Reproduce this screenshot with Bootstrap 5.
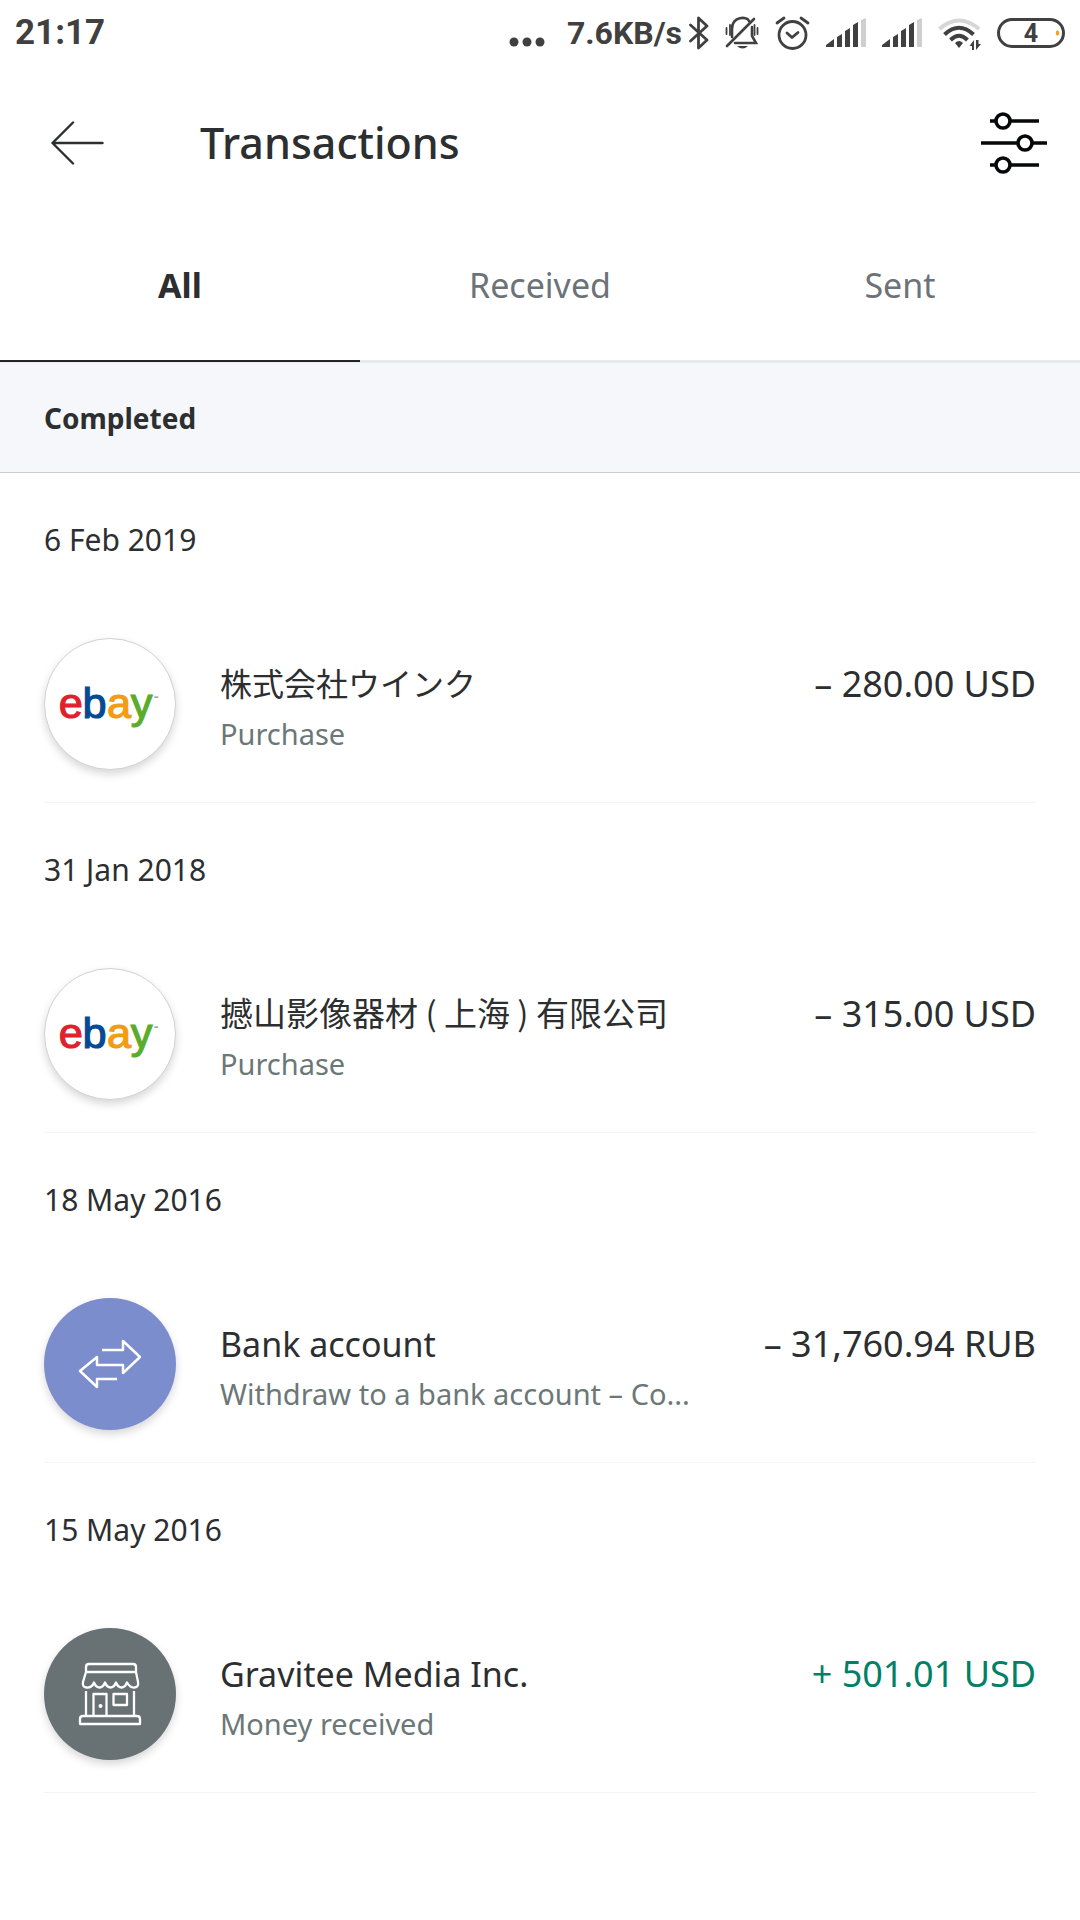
<!DOCTYPE html>
<html lang="en">
<head>
<meta charset="utf-8">
<meta name="viewport" content="width=device-width, initial-scale=1">
<title>Transactions</title>
<link href="https://cdn.jsdelivr.net/npm/bootstrap@5.3.0/dist/css/bootstrap.min.css" rel="stylesheet">
<style>
  body { font-family: "Noto Sans", "Noto Sans CJK SC", sans-serif; color: #2c2e2f; background: #fff; }
  svg { display: block; flex: none; }
  .status { height: 66px; padding: 0 15px; font-family: Roboto, sans-serif; font-weight: 700; color: #404040; }
  .clock { font-size: 35px; line-height: 40px; }
  .speed { font-size: 32px; line-height: 40px; margin-left: 22px; margin-right: 7px; }
  .ico-gap { gap: 16px; }
  .appbar { height: 154px; padding: 0 33px 0 51px; }
  .appbar h1 { font-size: 43px; line-height: 56px; font-weight: 500; margin-left: 96px; }
  .tabs { border-bottom: 1px solid #e9eaeb; height: 143px; }
  .tabs .nav-link { height: 142px; padding: 0 0 10px; font-size: 34px; line-height: 48px; color: #6c7378; border: 0; border-bottom: 2px solid #e9eaeb; border-radius: 0; background: none; }
  .tabs .nav-link.active { color: #2c2e2f; font-weight: 700; border-bottom-color: #252525; }
  .section-head { background: #f5f7fb; border-bottom: 1px solid #cdced0; height: 110px; padding: 0 44px; font-size: 28px; line-height: 40px; font-weight: 700; }
  .group { height: 330px; margin: 0 44px; padding-top: 46px; border-bottom: 1px solid #f4f5f5; }
  .group h3 { font-size: 30px; line-height: 42px; font-weight: 400; margin: 0 0 77px; }
  .entry { gap: 44px; color: inherit; text-decoration: none; }
  .avatar { width: 132px; height: 132px; border-radius: 50%; box-shadow: 0 4px 9px rgba(0,0,0,.16); }
  .shop { border: 1px solid #d2d2d2; background: #fff; }
  .bank { background: #7b8dcd; }
  .store { background: #687173; }
  .details { padding-top: 21px; }
  .payee { font-size: 34px; line-height: 50px; }
  .payee:lang(ja), .payee:lang(zh) { line-height: 46px; padding-bottom: 4px; }
  .payee:lang(ja) { font-size: 32px; font-family: "Noto Sans CJK JP", sans-serif; }
  .payee:lang(zh) { font-size: 33px; font-family: "Noto Sans CJK SC", sans-serif; }
  .kind { font-size: 29px; line-height: 50px; color: #6c7778; }
  .amount { font-size: 36px; line-height: 50px; }
  .credit { color: #008066; }
</style>
</head>
<body>
<div class="status d-flex align-items-center justify-content-between">
  <span class="clock">21:17</span>
  <div class="d-flex align-items-center">
    <svg width="36" height="34" viewBox="0 0 36 34" fill="#404040"><circle cx="5" cy="26" r="4.5"/><circle cx="18" cy="26" r="4.5"/><circle cx="31" cy="26" r="4.5"/></svg>
    <span class="speed">7.6KB/s</span>
    <div class="d-flex align-items-center ico-gap">
      <svg width="20" height="34" viewBox="0 0 20 34" fill="none" stroke="#404040" stroke-width="2.8" stroke-linecap="round" stroke-linejoin="round"><path d="M1.5 9 18 24 9.5 32V2L18 10 1.5 25"/></svg>
      <svg width="34" height="34" viewBox="0 0 34 34" fill="none" stroke="#404040" stroke-width="2.6" stroke-linecap="round"><path d="M7 21V13C7 0 22 0 24 5M27 11V20L31 27H10M2 30 29 3"/><path d="M1.5 12v6M5 9v10M32.500 12v6M29.500 9v10" stroke-width="1.8"/><path d="M12 30H23Q17.500 35 12 30Z" fill="#404040" stroke="none"/></svg>
      <svg width="35" height="34" viewBox="0 0 35 34" fill="none" stroke="#404040" stroke-width="2.8" stroke-linecap="round" stroke-linejoin="round"><circle cx="17.500" cy="19" r="13.500"/><path d="M12 17 17 21.500 23 16.500M2 7 9 2M26 2 33 7"/></svg>
      <svg width="40" height="34" viewBox="0 0 40 34" fill="#404040"><path d="M0 31V29L8 23V31ZM11 31V21L16 18V31ZM19 31V15L24 12V31ZM27 31V9L32 6V31Z"/><path d="M35 31V4L40 2V31Z" fill="#cfcfcf"/></svg>
      <svg width="40" height="34" viewBox="0 0 40 34" fill="#404040"><path d="M0 31V29L8 23V31ZM11 31V21L16 18V31ZM19 31V15L24 12V31ZM27 31V9L32 6V31Z"/><path d="M35 31V4L40 2V31Z" fill="#cfcfcf"/></svg>
      <svg width="43" height="34" viewBox="0 0 43 34" fill="none" stroke="#404040" stroke-width="4"><path d="M1.500 13Q21 -4 41 13" stroke="#d6d6d6"/><path d="M6.500 18.500Q21 5 35.500 18.500M12.500 24Q21 15.500 29.500 24"/><path d="M17 27Q21 23 25 27L21 32Z" fill="#404040" stroke="none"/><path d="M36 34V24L31.500 30H34V34ZM38 24V34L43 28H40.500V24Z" fill="#404040" stroke="none"/></svg>
      <svg width="68" height="34" viewBox="0 0 68 34"><rect x="1.500" y="3.500" width="65" height="27" rx="13.500" fill="none" stroke="#404040" stroke-width="3"/><text x="34" y="26" text-anchor="middle" font-family="Roboto" font-weight="700" font-size="25" fill="#404040">4</text><ellipse cx="60.500" cy="17" rx="1.700" ry="2.700" fill="#f9a11b"/></svg>
    </div>
  </div>
</div>

<header class="appbar d-flex align-items-center">
  <button class="btn p-0 border-0" type="button" aria-label="Back"><svg width="53" height="44" viewBox="0 0 53 44" fill="none" stroke="#2c2e2f" stroke-width="2.4" stroke-linecap="round" stroke-linejoin="round"><path d="M51.500 22H1.500M22 1.500 1.500 22 22 42.500"/></svg></button>
  <h1 class="mb-0 me-auto">Transactions</h1>
  <button class="btn p-0 border-0" type="button" aria-label="Filter"><svg width="66" height="64" viewBox="0 0 66 64" fill="#fff" stroke="#050808" stroke-width="3.600"><path d="M9 10H58M0 32H66M9 54H58"/><circle cx="22" cy="10" r="7"/><circle cx="44" cy="32" r="7"/><circle cx="22" cy="54" r="7"/></svg></button>
</header>

<ul class="nav nav-fill nav-justified tabs" role="tablist">
  <li class="nav-item" role="presentation"><button class="nav-link active" type="button" role="tab" aria-selected="true">All</button></li>
  <li class="nav-item" role="presentation"><button class="nav-link" type="button" role="tab" aria-selected="false">Received</button></li>
  <li class="nav-item" role="presentation"><button class="nav-link" type="button" role="tab" aria-selected="false">Sent</button></li>
</ul>

<main>
  <h2 class="section-head d-flex align-items-center mb-0">Completed</h2>

  <section class="group">
    <h3>6 Feb 2019</h3>
    <a href="#" class="entry d-flex">
      <svg class="avatar shop" viewBox="0 0 132 132" font-family="Liberation Sans" font-size="44" stroke-width="1.200"><text x="14" y="80" fill="#e0202c" stroke="#e0202c">e</text><text x="38" y="80" fill="#064a94" stroke="#064a94">b</text><text x="63" y="80" fill="#f39b13" stroke="#f39b13">a</text><text x="87" y="80" fill="#5aac2b" stroke="#5aac2b">y</text><path d="M111 59h4" stroke="#888"/></svg>
      <div class="details flex-grow-1"><div class="payee" lang="ja">株式会社ウインク</div><div class="kind">Purchase</div></div>
      <div class="details amount">– 280.00 USD</div>
    </a>
  </section>

  <section class="group">
    <h3>31 Jan 2018</h3>
    <a href="#" class="entry d-flex">
      <svg class="avatar shop" viewBox="0 0 132 132" font-family="Liberation Sans" font-size="44" stroke-width="1.200"><text x="14" y="80" fill="#e0202c" stroke="#e0202c">e</text><text x="38" y="80" fill="#064a94" stroke="#064a94">b</text><text x="63" y="80" fill="#f39b13" stroke="#f39b13">a</text><text x="87" y="80" fill="#5aac2b" stroke="#5aac2b">y</text><path d="M111 59h4" stroke="#888"/></svg>
      <div class="details flex-grow-1"><div class="payee" lang="zh">撼山影像器材 ( 上海 ) 有限公司</div><div class="kind">Purchase</div></div>
      <div class="details amount">– 315.00 USD</div>
    </a>
  </section>

  <section class="group">
    <h3>18 May 2016</h3>
    <a href="#" class="entry d-flex">
      <svg class="avatar bank" viewBox="0 0 132 132" fill="none" stroke="#fff" stroke-width="2.500" stroke-linejoin="round"><path d="M58 52H79V43L96 59 79 75V67H53V59L36 73 53 89V81H73"/></svg>
      <div class="details flex-grow-1"><div class="payee">Bank account</div><div class="kind">Withdraw to a bank account – Co...</div></div>
      <div class="details amount">– 31,760.94 RUB</div>
    </a>
  </section>

  <section class="group">
    <h3>15 May 2016</h3>
    <a href="#" class="entry d-flex">
      <svg class="avatar store" viewBox="0 0 132 132" fill="none" stroke="#fff" stroke-width="2.300" stroke-linejoin="round"><path d="M42 44V39Q42 36 45 36H89Q92 36 92 39V44ZM42 44 39 54Q38 59 42.500 59.500 48 60 50 54.500 52 59.500 55.500 59.500 59 59.500 61 54.500 63 59.500 66.500 59.500 70 59.500 72 54.500 74 59.500 77.500 59.500 81 59.500 83 54.500 86 60 90.500 59.500 95 59 94 54L92 44"/><path d="M42 63V87M90 63V87M49.500 87V66H62.500V87M69.500 66H83V77H69.500ZM36 96V91Q36 88 39 88H93Q96 88 96 91V96Z"/><circle cx="56.500" cy="78" r="2" fill="#fff" stroke="none"/></svg>
      <div class="details flex-grow-1"><div class="payee">Gravitee Media Inc.</div><div class="kind">Money received</div></div>
      <div class="details amount credit">+ 501.01 USD</div>
    </a>
  </section>
</main>
<script src="https://cdn.jsdelivr.net/npm/bootstrap@5.3.0/dist/js/bootstrap.bundle.min.js"></script>
</body>
</html>
